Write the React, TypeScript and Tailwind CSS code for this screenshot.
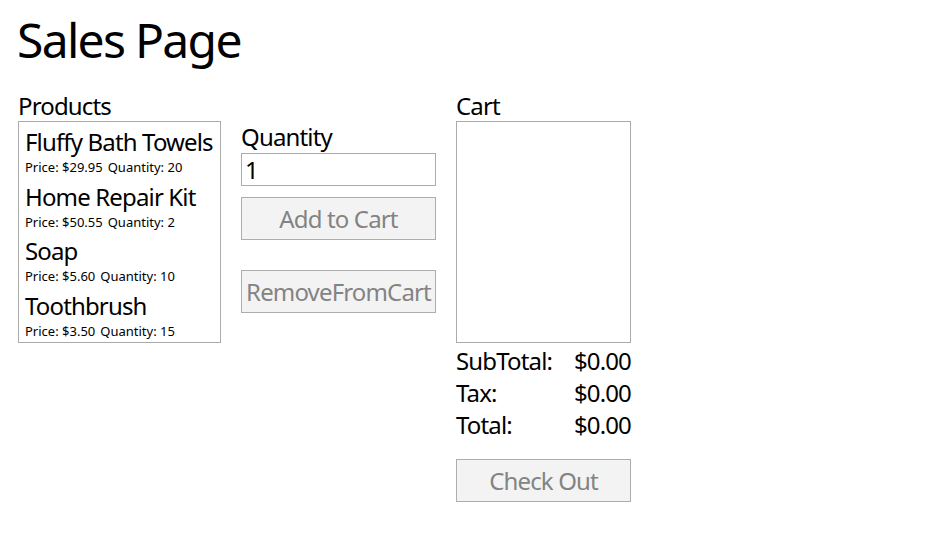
const products = [
  { name: "Fluffy Bath Towels", price: "$29.95", qty: 20 },
  { name: "Home Repair Kit", price: "$50.55", qty: 2 },
  { name: "Soap", price: "$5.60", qty: 10 },
  { name: "Toothbrush", price: "$3.50", qty: 15 },
];

const totals = [
  { label: "SubTotal:", value: "$0.00" },
  { label: "Tax:", value: "$0.00" },
  { label: "Total:", value: "$0.00" },
];

const big = "text-[24px] tracking-[-0.85px]";

const App = () => {
  return (
    <div
      className="min-h-screen bg-white text-black px-[18px] pt-[8px]"
      style={{ fontFamily: '"Segoe UI", "Noto Sans", sans-serif' }}
    >
      {/* Title */}
      <h1 className="text-[48px] leading-[64px] tracking-[-1.7px] ml-[-1px]">Sales Page</h1>

      <div className="flex gap-5 mt-[18px]">
        {/* Products */}
        <div className="w-[203px]">
          <div className={`${big} leading-[31px]`}>Products</div>
          <div className="h-[222px] border border-[#ababab] px-[6px] pt-[3px]">
            {products.map((p) => (
              <div key={p.name} className="h-[54.5px]">
                <div className={`${big} leading-[34px] whitespace-nowrap`}>{p.name}</div>
                <div className="text-[13px] leading-[17px] flex gap-[5px]">
                  <span>Price: {p.price}</span>
                  <span>Quantity: {p.qty}</span>
                </div>
              </div>
            ))}
          </div>
        </div>

        {/* Quantity + actions */}
        <div className="w-[195px] pt-[31px]">
          <div className={`${big} leading-[32px]`}>Quantity</div>
          <input
            defaultValue="1"
            className={`${big} w-full h-[33px] border border-[#ababab] px-[3px] leading-[31px] outline-none`}
          />
          <button className={`${big} mt-[11px] w-full h-[43px] border border-[#adadad] bg-[#f3f3f3] text-[#838383]`}>
            Add to Cart
          </button>
          <button className={`${big} mt-[30px] w-full h-[43px] border border-[#adadad] bg-[#f3f3f3] text-[#838383]`}>
            RemoveFromCart
          </button>
        </div>

        {/* Cart */}
        <div className="w-[175px]">
          <div className={`${big} leading-[31px]`}>Cart</div>
          <div className="h-[222px] border border-[#ababab]" />
          <div className="mt-[2px]">
            {totals.map((t) => (
              <div key={t.label} className={`${big} flex justify-between leading-[32px]`}>
                <span>{t.label}</span>
                <span>{t.value}</span>
              </div>
            ))}
          </div>
          <button className={`${big} mt-[18px] w-full h-[43px] border border-[#adadad] bg-[#f3f3f3] text-[#838383]`}>
            Check Out
          </button>
        </div>
      </div>
    </div>
  );
};

export default App;
